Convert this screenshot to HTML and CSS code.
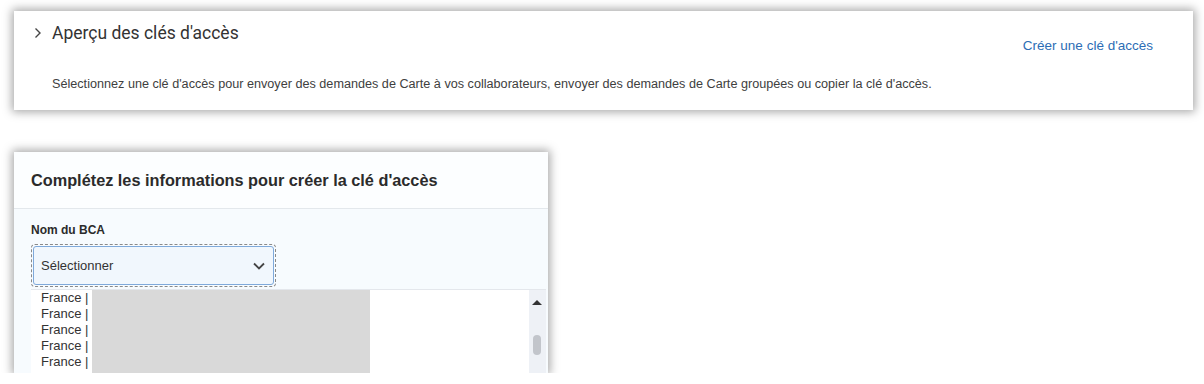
FILE: index.html
```html
<!DOCTYPE html>
<html lang="fr">

<head>
    <meta charset="UTF-8">
    <meta name="viewport" content="width=device-width, initial-scale=1.0">
    <title>Clés d'accès</title>
    <link rel="stylesheet" href="styles.css">
</head>

<body>
    <section class="overview">
        <div class="overview-head">
            <div class="overview-title">
                <svg class="chevron-right" width="10" height="12" viewBox="0 0 10 12">
                    <path d="M2.5 1.5 L7 6 L2.5 10.5" fill="none" stroke="#444" stroke-width="1.4"/>
                </svg>
                <h2>Aperçu des clés d'accès</h2>
            </div>
            <a href="#" class="create-link">Créer une clé d'accès</a>
        </div>
        <p class="overview-text">Sélectionnez une clé d'accès pour envoyer des demandes de Carte à vos collaborateurs, envoyer des demandes de Carte groupées ou copier la clé d'accès.</p>
    </section>

    <section class="create-card">
        <div class="create-head">
            <h3>Complétez les informations pour créer la clé d'accès</h3>
        </div>
        <div class="create-body">
            <label class="field-label">Nom du BCA</label>
            <div class="select-wrap">
                <div class="select-box">
                    <span>Sélectionner</span>
                    <svg width="14" height="10" viewBox="0 0 14 10">
                        <path d="M2 2.5 L7 7.5 L12 2.5" fill="none" stroke="#444" stroke-width="1.8"/>
                    </svg>
                </div>
            </div>

            <div class="listbox">
                <ul class="options">
                    <li><span class="opt-label">France |</span><span class="opt-mask"></span></li>
                    <li><span class="opt-label">France |</span><span class="opt-mask"></span></li>
                    <li><span class="opt-label">France |</span><span class="opt-mask"></span></li>
                    <li><span class="opt-label">France |</span><span class="opt-mask"></span></li>
                    <li><span class="opt-label">France |</span><span class="opt-mask"></span></li>
                </ul>
                <div class="scrollbar">
                    <span class="arrow-up"></span>
                    <span class="thumb"></span>
                </div>
            </div>
        </div>
    </section>
</body>

</html>
```

FILE: styles.css
```css
body {
    font-family: "Liberation Sans", Arial, sans-serif;
    background-color: #fff;
    margin: 0;
    padding: 11px 11px 0 14px;
    color: #333;
}

/* carte aperçu */
.overview {
    width: 1179px;
    height: 99px;
    box-sizing: border-box;
    background-color: #fff;
    box-shadow: 0 0 9px 2px rgba(0, 0, 0, 0.35);
    padding: 13px 40px 0 19px;
}

.overview-head {
    display: flex;
    justify-content: space-between;
    align-items: flex-start;
}

.overview-title {
    display: flex;
    align-items: center;
    gap: 9px;
}

.overview-title h2 {
    margin: 0;
    font-size: 17.5px;
    font-weight: normal;
    font-family: "Roboto", "Liberation Sans", sans-serif;
    line-height: 18px;
    color: #333;
}

.create-link {
    margin-top: 14px;
    font-size: 13.5px;
    color: #2c6db5;
    text-decoration: none;
}

.overview-text {
    margin: 24px 0 0 19px;
    font-size: 12.65px;
    line-height: 15px;
    color: #404040;
}

/* carte création */
.create-card {
    position: relative;
    width: 534px;
    height: 221px;
    margin-top: 42px;
    background-color: #f7fbfe;
    box-shadow: 0 0 9px 2px rgba(0, 0, 0, 0.35);
    overflow: hidden;
}

.create-head {
    height: 57px;
    box-sizing: border-box;
    padding: 19px 17px 0;
    background-color: #fcfeff;
    border-bottom: 1px solid #e3e8ec;
}

.create-head h3 {
    margin: 0;
    font-size: 16.3px;
    line-height: 19px;
    font-weight: bold;
    color: #2b2b2b;
}

.create-body {
    padding: 14px 17px 0;
}

.field-label {
    display: block;
    font-size: 12px;
    line-height: 14px;
    font-weight: bold;
    color: #2b2b2b;
    margin-bottom: 7px;
}

.select-wrap {
    width: 245px;
    height: 43px;
    box-sizing: border-box;
    border: 1px dashed #8a8a8a;
    border-radius: 4px;
    padding: 1px;
}

.select-box {
    height: 100%;
    box-sizing: border-box;
    border: 1px solid #7fa9da;
    border-radius: 3px;
    background-color: #f1f7fd;
    display: flex;
    justify-content: space-between;
    align-items: center;
    padding: 0 7px 0 7px;
    font-size: 13px;
    color: #333;
}

/* liste déroulante */
.listbox {
    position: absolute;
    left: 17px;
    top: 137px;
    width: 515px;
    height: 84px;
    display: flex;
    background-color: #fff;
    border-top: 1px solid #e4e7ec;
}

.options {
    list-style: none;
    margin: 0;
    padding: 0 0 0 2px;
    flex: 1;
    overflow: hidden;
}

.options li {
    display: flex;
    height: 16px;
    font-size: 13px;
    line-height: 16px;
    color: #333;
}

.options li:last-child {
    height: 20px;
}

.opt-label {
    width: 59px;
    padding-left: 8px;
    box-sizing: border-box;
}

.opt-mask {
    width: 278px;
    background-color: #d9d9d9;
}

.scrollbar {
    width: 17px;
    background-color: #eef1f6;
    position: relative;
}

.arrow-up {
    position: absolute;
    top: 10px;
    left: 3px;
    border-left: 5px solid transparent;
    border-right: 5px solid transparent;
    border-bottom: 5px solid #333;
}

.thumb {
    position: absolute;
    top: 45px;
    left: 4px;
    width: 8px;
    height: 20px;
    border-radius: 4px;
    background-color: #c2c5cb;
}
```
